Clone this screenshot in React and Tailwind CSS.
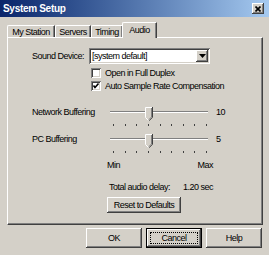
import React from "react";

const btnBevel =
  "shadow-[inset_-1px_-1px_#404040,inset_1px_1px_#ffffff,inset_-2px_-2px_#808080,inset_2px_2px_#d4d0c8]";
const sunken =
  "shadow-[inset_1px_1px_#808080,inset_-1px_-1px_#ffffff,inset_2px_2px_#404040,inset_-2px_-2px_#d4d0c8]";

function Thumb() {
  return (
    <svg width="8" height="14" viewBox="0 0 8 14" className="absolute top-0 left-[35px]">
      <polygon points="0,0 8,0 8,10 4,14 0,10" fill="#d4d0c8" />
      <polyline points="0.5,10.5 0.5,0.5 7,0.5" fill="none" stroke="#ffffff" strokeWidth="1" />
      <polyline points="7.5,0 7.5,10.3 4,13.8" fill="none" stroke="#404040" strokeWidth="1" />
      <polyline points="6.5,1 6.5,10 4,12.5" fill="none" stroke="#808080" strokeWidth="1" />
      <polyline points="0.5,10.5 3.5,13.5" fill="none" stroke="#ffffff" strokeWidth="1" />
    </svg>
  );
}

function SliderRow({ label, value }) {
  return (
    <div className="flex items-start h-[14px]">
      <div className="w-[78px] mt-[-1px] leading-[12px]">{label}</div>
      <div className="relative w-[98px] h-[14px]">
        <div className="absolute left-0 right-0 top-[4px] h-[1px] bg-[#808080]" />
        <div className="absolute left-0 right-0 top-[5px] h-[1px] bg-white" />
        <Thumb />
      </div>
      <div className="ml-[8px] mt-[-1px] leading-[12px]">{value}</div>
    </div>
  );
}

function Ticks() {
  return (
    <div className="ml-[81px] w-[94px] h-[2px] flex justify-between">
      {[0, 1, 2, 3, 4, 5, 6, 7, 8].map((i) => (
        <div key={i} className="w-[1px] h-[2px] bg-[#404040]" />
      ))}
    </div>
  );
}

function Checkbox({ checked, label }) {
  return (
    <div className="flex items-center h-[13px] ml-[59px]">
      <div className={`w-[10px] h-[10px] bg-white ${sunken} relative shrink-0`}>
        {checked && (
          <svg width="10" height="10" viewBox="0 0 10 10" className="absolute inset-0">
            <polyline points="2.5,4.5 4,6.5 7.5,2.5" fill="none" stroke="#000" strokeWidth="1.6" />
          </svg>
        )}
      </div>
      <span className="ml-[4px] leading-[12px]">{label}</span>
    </div>
  );
}

function Button({ children, className = "", focused = false }) {
  if (focused) {
    return (
      <div className={`border border-black bg-[#d4d0c8] ${className}`}>
        <div className={`w-full h-full flex items-center justify-center p-[3px] ${btnBevel}`}>
          <div className="w-full h-full flex items-center justify-center border border-dotted border-black">
            {children}
          </div>
        </div>
      </div>
    );
  }
  return (
    <div className={`flex items-center justify-center bg-[#d4d0c8] ${btnBevel} ${className}`}>
      {children}
    </div>
  );
}

const tabBase =
  "h-[12px] border-t border-l border-white border-r border-r-[#404040] rounded-tl-[2px] flex items-center justify-center shadow-[inset_-1px_0_#808080]";

export default function App() {
  return (
    <div
      className="w-[269px] h-[255px] bg-[#d4d0c8] overflow-hidden text-black text-[9px] leading-[12px] tracking-[-0.5px] whitespace-nowrap"
      style={{ fontFamily: '"Liberation Sans", Arial, sans-serif' }}
    >
      {/* Title bar */}
      <div className="h-[17px] bg-linear-to-r from-[#0a246a] to-[#a6caf0] flex items-center justify-between pl-[3px] pr-[5px]">
        <span className="text-white font-bold text-[10px] leading-[13px] tracking-[-0.3px]">System Setup</span>
        <div className={`w-[12px] h-[11px] bg-[#d4d0c8] ${btnBevel} flex items-center justify-center`}>
          <svg width="6" height="6" viewBox="0 0 6 6">
            <path d="M0.5 0.5 L5.5 5.5 M5.5 0.5 L0.5 5.5" stroke="#000" strokeWidth="1.6" />
          </svg>
        </div>
      </div>

      {/* Tabs */}
      <div className="flex items-end ml-[7px] mt-[5px] h-[15px] relative z-10">
        <div className={`w-[48px] ${tabBase}`}>My Station</div>
        <div className={`w-[36px] ${tabBase}`}>Servers</div>
        <div className={`w-[32px] ${tabBase}`}>Timing</div>
        <div className="w-[35px] h-[16px] -mb-[1px] -ml-[1px] bg-[#d4d0c8] border-t border-l border-white border-r border-r-[#404040] rounded-tl-[2px] flex items-start justify-center pt-[1px] shadow-[inset_-1px_0_#808080]">
          Audio
        </div>
      </div>

      {/* Panel */}
      <div className="ml-[7px] w-[256px] h-[188px] border border-t-white border-l-white border-r-[#404040] border-b-[#404040] shadow-[inset_-1px_-1px_#808080] pl-[24px] flex flex-col">
        {/* Sound device */}
        <div className="mt-[10px] flex items-center h-[16px]">
          <div className="w-[57px]">Sound Device:</div>
          <div className={`w-[121px] h-[16px] bg-white ${sunken} flex items-center justify-between pl-[3px] pr-[2px]`}>
            <span>[system default]</span>
            <div className={`w-[12px] h-[12px] bg-[#d4d0c8] ${btnBevel} flex items-center justify-center`}>
              <svg width="7" height="4" viewBox="0 0 7 4">
                <polygon points="0,0 7,0 3.5,4" fill="#000" />
              </svg>
            </div>
          </div>
        </div>

        <div className="mt-[2px]">
          <Checkbox checked={false} label="Open in Full Duplex" />
          <Checkbox checked={true} label="Auto Sample Rate Compensation" />
        </div>

        <div className="mt-[15px]">
          <SliderRow label="Network Buffering" value="10" />
        </div>
        <div className="mt-[3px]">
          <Ticks />
        </div>
        <div className="mt-[8px]">
          <SliderRow label="PC Buffering" value="5" />
        </div>
        <div className="mt-[3px]">
          <Ticks />
        </div>

        <div className="mt-[6px] ml-[75px] w-[106px] flex justify-between h-[12px]">
          <span>Min</span>
          <span>Max</span>
        </div>

        <div className="mt-[10px] ml-[77px] flex h-[12px]">
          <span className="w-[74px]">Total audio delay:</span>
          <span>1.20 sec</span>
        </div>

        <div className="mt-[4px] ml-[75px]">
          <Button className="w-[74px] h-[16px]">Reset to Defaults</Button>
        </div>
      </div>

      {/* Bottom buttons */}
      <div className="mt-[3px] flex justify-end gap-[4px] pr-[7px]">
        <Button className="w-[56px] h-[20px]">OK</Button>
        <Button className="w-[56px] h-[20px]" focused>
          Cancel
        </Button>
        <Button className="w-[56px] h-[20px]">Help</Button>
      </div>
    </div>
  );
}
